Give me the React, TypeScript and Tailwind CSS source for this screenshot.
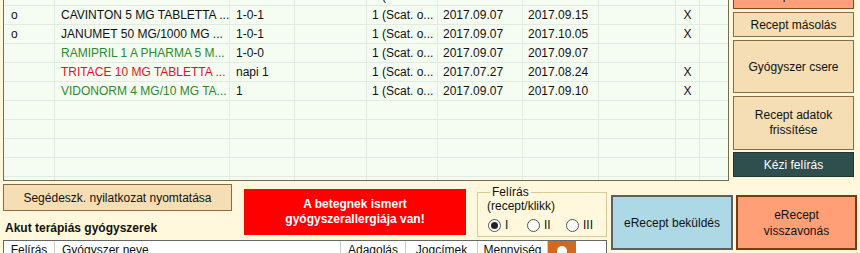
import React from "react";

type Row = {
  o: string;
  name: string;
  color: string;
  dos: string;
  q: string;
  d1: string;
  d2: string;
  x: string;
};

const rows: Row[] = [
  { o: "", name: "ALGOPYRIN 500 MG TABLETTA ...", color: "text-[#111]", dos: "1-0-0", q: "1 (Scat. o...", d1: "2017.09.07", d2: "2017.10.07", x: "X" },
  { o: "o", name: "CAVINTON 5 MG TABLETTA ...", color: "text-[#111]", dos: "1-0-1", q: "1 (Scat. o...", d1: "2017.09.07", d2: "2017.09.15", x: "X" },
  { o: "o", name: "JANUMET 50 MG/1000 MG ...", color: "text-[#111]", dos: "1-0-1", q: "1 (Scat. o...", d1: "2017.09.07", d2: "2017.10.05", x: "X" },
  { o: "", name: "RAMIPRIL 1 A PHARMA 5 M...", color: "text-[#2b8a2b]", dos: "1-0-0", q: "1 (Scat. o...", d1: "2017.09.07", d2: "2017.09.07", x: "" },
  { o: "", name: "TRITACE 10 MG TABLETTA ...", color: "text-[#e8121a]", dos: "napi 1", q: "1 (Scat. o...", d1: "2017.07.27", d2: "2017.08.24", x: "X" },
  { o: "", name: "VIDONORM 4 MG/10 MG TA...", color: "text-[#2b8a2b]", dos: "1", q: "1 (Scat. o...", d1: "2017.09.07", d2: "2017.09.10", x: "X" },
];

const cell = "h-[19px] border-b border-r border-[#e1ebde] leading-[18px] whitespace-nowrap overflow-hidden";
const cellLast = "h-[19px] border-b border-[#e1ebde] leading-[18px]";

function Radio({ checked, label }: { checked?: boolean; label: string }) {
  return (
    <div className="flex w-[39px] items-center">
      <span className="flex h-[13px] w-[13px] items-center justify-center rounded-full border border-[#555] bg-white">
        {checked && <span className="h-[7px] w-[7px] rounded-full bg-[#222]" />}
      </span>
      <span className="ml-[4px] leading-[14px]">{label}</span>
    </div>
  );
}

export default function App() {
  const empty = Array.from({ length: 5 });
  return (
    <div className="h-[253px] w-[860px] overflow-hidden bg-[#fff8dc] font-['Liberation_Sans',Arial,sans-serif] text-[12px] text-[#111]">
      <div className="-mt-[14px] flex">
        <div className="ml-[3px] h-[195px] w-[726px] overflow-hidden border border-[#756b4d] bg-[#f5fcf2]">
          <div className="grid grid-cols-[51px_175px_65px_72px_71px_85px_76px_77px_24px_28px]">
            {rows.map((r, i) => (
              <React.Fragment key={i}>
                <div className={`${cell} pl-[7px]`}>{r.o}</div>
                <div className={`${cell} pl-[6px] ${r.color}`}>{r.name}</div>
                <div className={`${cell} pl-[6px]`}>{r.dos}</div>
                <div className={cell}></div>
                <div className={`${cell} pl-[5px]`}>{r.q}</div>
                <div className={`${cell} pl-[5px]`}>{r.d1}</div>
                <div className={`${cell} pl-[5px]`}>{r.d2}</div>
                <div className={cell}></div>
                <div className={`${cell} text-center`}>{r.x}</div>
                <div className={cellLast}></div>
              </React.Fragment>
            ))}
            {empty.map((_, i) => (
              <React.Fragment key={`e${i}`}>
                <div className={cell}></div>
                <div className={cell}></div>
                <div className={cell}></div>
                <div className={cell}></div>
                <div className={cell}></div>
                <div className={cell}></div>
                <div className={cell}></div>
                <div className={cell}></div>
                <div className={cell}></div>
                <div className={cellLast}></div>
              </React.Fragment>
            ))}
          </div>
        </div>
        <div className="ml-[4px] flex w-[121px] flex-col">
          <div className="flex h-[23px] items-center justify-center border border-[#8b4513] bg-[#ffa07a] pb-[6px]">Recept törlése</div>
          <div className="mt-[3px] flex h-[25px] items-center justify-center border border-[#8b6b43] bg-[#f5deb3]">Recept másolás</div>
          <div className="mt-[3px] flex h-[53px] items-center justify-center border border-[#8b6b43] bg-[#f5deb3]">Gyógyszer csere</div>
          <div className="mt-[3px] flex h-[54px] flex-col items-center justify-center border border-[#8b6b43] bg-[#f5deb3] text-center leading-[15px]">
            <span>Recept adatok</span>
            <span>frissítése</span>
          </div>
          <div className="mt-[2px] flex h-[25px] items-center justify-center border border-[#1e3636] bg-[#2f4f4f] text-white">Kézi felírás</div>
        </div>
      </div>

      <div className="flex">
        <div className="ml-[3px] w-[604px]">
          <div className="flex h-[59px]">
            <div className="flex w-[229px] flex-col">
              <div className="mt-[3px] flex h-[27px] items-center justify-center border border-[#8b6b43] bg-[#f5deb3]">
                Segédeszk. nyilatkozat nyomtatása
              </div>
              <div className="mt-[10px] pl-[2px] text-[12px] font-bold leading-[14px]">Akut terápiás gyógyszerek</div>
            </div>
            <div className="ml-[12px] mt-[8px] flex h-[46px] w-[222px] flex-col items-center justify-center bg-[#ff0000] text-center font-bold leading-[15px] text-white">
              <span>A betegnek ismert</span>
              <span>gyógyszerallergiája van!</span>
            </div>
            <fieldset className="ml-[11px] mt-[4px] h-[52px] w-[130px] border border-[#d8c99b] pl-[9px]">
              <legend className="ml-[3px] px-[2px] leading-[14px]">Felírás</legend>
              <div className="leading-[14px]">(recept/klikk)</div>
              <div className="ml-[1px] mt-[5px] flex">
                <Radio checked label="I" />
                <Radio label="II" />
                <Radio label="III" />
              </div>
            </fieldset>
          </div>
          <div className="grid h-[20px] grid-cols-[51px_286px_65px_72px_70px_28px_28px] border-l border-r border-t border-[#666] bg-white">
            <div className="border-r border-[#ccc] pt-[2px] text-center leading-[14px]">Felírás</div>
            <div className="border-r border-[#ccc] pl-[7px] pt-[2px] leading-[14px]">Gyógyszer neve</div>
            <div className="border-r border-[#ccc] pt-[2px] text-center leading-[14px]">Adagolás</div>
            <div className="border-r border-[#ccc] pt-[2px] text-center leading-[14px]">Jogcímek</div>
            <div className="border-r border-[#ccc] pt-[2px] text-center leading-[14px]">Mennyiség</div>
            <div className="flex justify-center bg-[#d2691e] pt-[5px]">
              <span className="h-[10px] w-[10px] rounded-full bg-white" />
            </div>
            <div></div>
          </div>
        </div>
        <div className="ml-[4px] mt-[14px] flex h-[55px]">
          <div className="flex w-[122px] items-center justify-center border-2 border-[#5f5f5f] bg-[#add8e6]">eRecept beküldés</div>
          <div className="ml-[3px] flex w-[121px] flex-col items-center justify-center border-2 border-[#7a3a12] bg-[#ff9f78] text-center leading-[16px]">
            <span>eRecept</span>
            <span>visszavonás</span>
          </div>
        </div>
      </div>
    </div>
  );
}
